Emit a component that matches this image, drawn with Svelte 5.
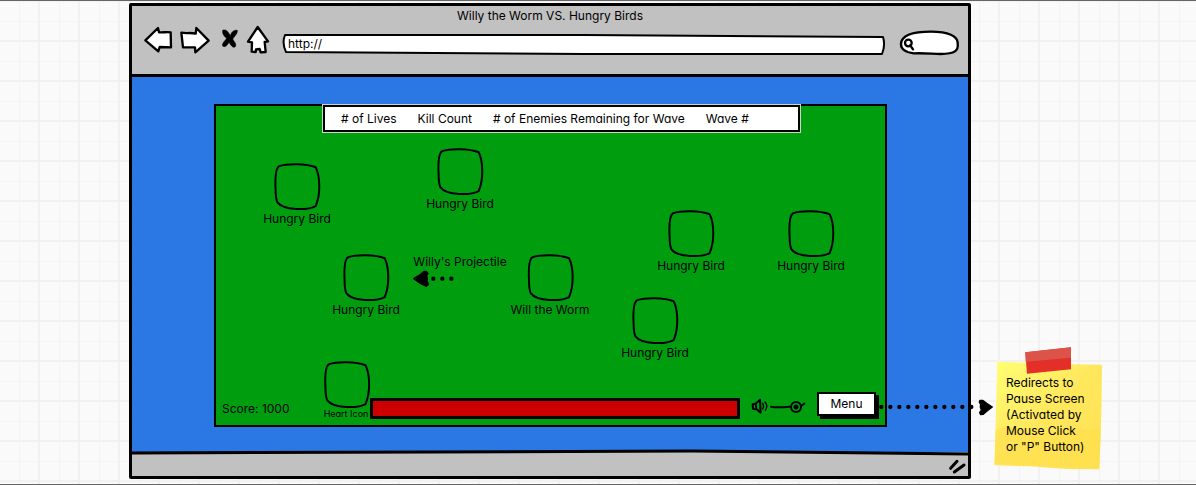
<script>
  const sprites = [
    { name: 'Hungry Bird', x: 81, y: 56 },
    { name: 'Hungry Bird', x: 244, y: 41 },
    { name: 'Hungry Bird', x: 150, y: 147 },
    { name: 'Will the Worm', x: 334, y: 147 },
    { name: 'Hungry Bird', x: 475, y: 103 },
    { name: 'Hungry Bird', x: 595, y: 103 },
    { name: 'Hungry Bird', x: 439, y: 190 }
  ];
  const fieldWidth = 669;
  const stats = ['# of Lives', 'Kill Count', '# of Enemies Remaining for Wave', 'Wave #'];
  const noteLines = ['Redirects to', 'Pause Screen', '(Activated by', 'Mouse Click', 'or "P" Button)'];
  let url = $state('http://');
  let query = $state('');
  let volume = $state(82);
</script>

{#snippet tile()}
  <svg class="tile" viewBox="191 67 141 148" aria-hidden="true">
    <path d="M198 150C196 112 199 86 208 80C235 71 290 72 319 83C333 112 334 165 319 200C296 213 222 214 203 188C198 176 198 165 198 150Z" />
  </svg>
{/snippet}

<div class="page">
  <section class="browser">
    <header>
      <h1>Willy the Worm VS. Hungry Birds</h1>
      <div class="toolbar">
        <button aria-label="Back">
          <svg width="30" height="30" viewBox="67 75 90 90"><path d="M74 121L112 84L115 97C128 98 139 95 150 97L151 142L117 141L113 154Z" /></svg>
        </button>
        <button aria-label="Forward">
          <svg width="30" height="30" viewBox="183 75 90 90"><path d="M184 98C199 101 212 97 227 101L229 84L266 122L226 157L225 142L189 142Z" /></svg>
        </button>
        <button aria-label="Stop">
          <svg width="20" height="30" viewBox="297 75 60 90"><path class="solid" d="M309 91C320 86 325 98 331 107C334 97 341 89 352 91C353 101 343 109 338 117C343 127 351 132 345 141C335 144 332 132 327 127C321 136 317 143 308 138C306 128 316 123 320 115C312 109 305 99 309 91Z" /></svg>
        </button>
        <button aria-label="Home">
          <svg width="24" height="30" viewBox="381 75 72 90"><path d="M413 81L444 124L434 126L437 156L422 157L419 147L408 148L407 156L395 155L396 127L384 125Z" /></svg>
        </button>
        <label class="address">
          <svg viewBox="0 0 600 21" preserveAspectRatio="none" aria-hidden="true"><path d="M2 1L300 1L598 3C600 9 599 15 597 20L300 20L3 18C0 12 0 6 2 1Z" /></svg>
          <input type="text" aria-label="Address" bind:value={url} />
        </label>
        <label class="search">
          <svg viewBox="597 93 183 75" aria-hidden="true">
            <path d="M603 134C605 108 640 98 693 98C745 98 773 111 773 132C776 156 765 164 722 165C690 164 675 162 641 163C615 160 602 151 603 134Z" />
            <circle cx="625" cy="132" r="10" /><path d="M631 139L639 151" />
          </svg>
          <input type="text" aria-label="Search" bind:value={query} />
        </label>
      </div>
    </header>

    <main>
      <div class="stage">
        <div class="stats">
          {#each stats as stat}<span>{stat}</span>{/each}
        </div>
        {#each sprites as s}
          <div class="sprite" style="left: {(s.x / fieldWidth) * 100}%; top: {s.y}px">
            {@render tile()}
            <span>{s.name}</span>
          </div>
        {/each}
        <div class="projectile">
          <span>Willy's Projectile</span>
          <svg width="42" height="18" viewBox="39 387 126 54" aria-hidden="true">
            <path class="head" d="M41 413L62 400L72 391L79 391L84 397L80 405L82 413L81 421L86 430L79 436L70 432L56 424Z" />
            <path class="dots" d="M100 413H160" />
          </svg>
        </div>
        <div class="controls">
          <span class="score">Score: 1000</span>
          <div class="heart">{@render tile()}<small>Heart Icon</small></div>
          <div class="health" role="img" aria-label="Health"></div>
          <label class="volume">
            <svg width="56" height="18" viewBox="155 144 168 54" aria-hidden="true">
              <path d="M160 163L169 161L182 149L184 188L172 178L161 177Z" /><path d="M169 161L171 177" />
              <path class="thin" d="M190 160Q195 169 190 177M197 156Q207 168 198 181" />
              <path d="M215 170Q235 174 270 170M305 168L315 161" />
            </svg>
            <input type="range" aria-label="Volume" bind:value={volume} />
          </label>
          <div class="menu">
            <button>Menu</button>
            <svg class="link" width="116" height="18" viewBox="537 144 348 54" aria-hidden="true">
              <path class="dots" d="M544 171H820" />
              <path class="head" d="M840 151L848 151L860 160L877 171L862 182L850 193L842 194L839 188L844 180L841 171L842 163L838 157Z" />
            </svg>
          </div>
        </div>
      </div>
    </main>

    <footer>
      <svg class="edge" viewBox="0 0 836 8" preserveAspectRatio="none" aria-hidden="true"><path class="fill" d="M0 3L300 2L560 1L836 4V8H0Z" /><path d="M0 3L300 2L560 1L836 4" /></svg>
      <svg class="grip" width="18" height="14" viewBox="748 331 54 42" aria-hidden="true"><path d="M753 356L772 335M764 367L793 346" /></svg>
    </footer>
  </section>

  <aside class="note">
    <svg viewBox="66 48 339 375" aria-hidden="true">
      <defs>
        <linearGradient id="paper" x1="0" y1="0" x2="1" y2="1">
          <stop offset="0" stop-color="#ffff73" /><stop offset="0.3" stop-color="#fff067" /><stop offset="0.5" stop-color="#ffe75c" /><stop offset="1" stop-color="#ffe152" />
        </linearGradient>
      </defs>
      <path fill="url(#paper)" d="M82 95L230 101L396 104L394 250L388 418L290 417L180 409L73 406L77 280Z" />
      <path fill="#ffe04f" d="M77 300L105 292L230 312L280 300L393 296L388 414L180 407L74 402Z" opacity=".7" />
      <path fill="#e32f27" d="M166 67L303 52V118L171 131Z" />
      <path fill="#dc534a" d="M166 67L303 52V83L167 95Z" />
    </svg>
    <p>{#each noteLines as line}<span>{line}</span>{/each}</p>
  </aside>
</div>

<style>
  :global(body) { margin: 0; }
  * { box-sizing: border-box; }
  .page {
    display: grid;
    grid-template-columns: minmax(0, 1fr) 225px;
    min-height: 100vh;
    padding: 2px 0 5px 129px;
    border: solid #666;
    border-width: 1px 0;
    background-color: #fafafa;
    background-image:
      linear-gradient(90deg, #f1f1f1 2px, transparent 2px),
      linear-gradient(#f1f1f1 2px, transparent 2px),
      linear-gradient(90deg, #f4f4f4 1px, transparent 1px),
      linear-gradient(#f4f4f4 1px, transparent 1px);
    background-size: 40px 40px;
    background-position: 38px 0, 0 39px, 19px 0, 0 20px;
    font: 12px/16px Inter, "Liberation Sans", sans-serif;
    font-feature-settings: "cv11";
    color: #000;
  }
  button, input { font: inherit; font-feature-settings: inherit; color: inherit; }
  svg { display: block; overflow: visible; }
  .browser {
    display: flex;
    flex-direction: column;
    border: 3px solid #000;
    border-radius: 2px;
    background: #c1c1c1;
  }
  header { padding-bottom: 19px; border-bottom: 3px solid #000; }
  h1 { margin: 0; font-size: 12px; font-weight: 400; line-height: 19px; text-align: center; }
  .toolbar { display: flex; align-items: flex-end; gap: 8px; padding: 0 8px 0 11px; }
  .toolbar button { padding: 0; border: 0; background: none; }
  .toolbar path, .search circle { fill: #fff; stroke: #000; stroke-width: 7; stroke-linejoin: round; stroke-linecap: round; }
  .toolbar .solid { fill: #000; stroke-width: 2; }
  .address { position: relative; flex: 1; height: 21px; margin: 0 6px 0 4px; }
  .address svg { position: absolute; inset: 0; width: 100%; height: 100%; }
  .toolbar .address path { stroke-width: 2; vector-effect: non-scaling-stroke; }
  .toolbar input { position: relative; display: block; width: 100%; height: 100%; padding: 0 5px 3px; border: 0; outline: 0; background: none; }
  .search { position: relative; width: 61px; height: 25px; }
  .search svg { position: absolute; inset: 0; }
  .toolbar .search input { padding-left: 18px; }

  main { flex: 1; display: flex; padding: 27px 81px 25px 82px; background: #2b78e4; }
  .stage {
    position: relative;
    flex: 1;
    display: flex;
    flex-direction: column;
    justify-content: space-between;
    min-height: 320px;
    border: 2px solid #000;
    background: #009e0f;
  }
  .stats {
    display: flex;
    gap: 21px;
    width: 477px;
    margin: -1px 0 0 107px;
    padding: 4px 16px 3px;
    border: 2px solid #000;
    outline: 1px solid #c8d8c8;
    background: #fff;
    white-space: nowrap;
  }
  .sprite { position: absolute; display: flex; flex-direction: column; align-items: center; transform: translateX(-50%); white-space: nowrap; }
  .tile { width: 47px; height: 49px; fill: none; stroke: #000; stroke-width: 6; }
  .projectile { position: absolute; left: 29.5%; top: 148px; white-space: nowrap; }
  .head { fill: #000; stroke: #000; stroke-width: 4; stroke-linejoin: round; }
  .dots { fill: none; stroke: #000; stroke-width: 13; stroke-linecap: round; stroke-dasharray: 0 27; }

  .controls { display: flex; align-items: flex-end; padding: 0 6px 6px; }
  .score { width: 100px; padding-bottom: 2px; }
  .heart { display: flex; flex-direction: column; align-items: center; width: 48px; white-space: nowrap; }
  .heart small { font-size: 9px; line-height: 10px; }
  .health { flex: 1; height: 21px; border: 3px solid #000; background: #c00; }
  .volume { position: relative; width: 56px; margin: 0 10px 3px 11px; }
  .volume svg { fill: none; stroke: #000; stroke-width: 6; stroke-linejoin: round; stroke-linecap: round; }
  .volume .thin { stroke-width: 4; }
  .volume input { position: absolute; left: 19px; top: 3px; width: 36px; height: 12px; margin: 0; appearance: none; background: none; }
  .volume input::-webkit-slider-thumb {
    appearance: none;
    width: 12px;
    height: 12px;
    border: 2px solid #000;
    border-radius: 50%;
    background: radial-gradient(circle, #000 2px, transparent 3px);
  }
  .menu { position: relative; margin-bottom: 3px; }
  .menu button { display: block; width: 59px; height: 24px; margin-right: 3px; padding: 0; border: 2px solid #000; background: #fff; box-shadow: 3px 3px 0 #000; }
  .link { position: absolute; left: 100%; top: 6px; z-index: 1; }

  footer { position: relative; display: flex; justify-content: flex-end; padding: 8px 1px 2px; }
  .edge { position: absolute; left: 0; top: -2px; width: 100%; height: 8px; fill: none; stroke: #000; stroke-width: 3; }
  .edge .fill { fill: #c1c1c1; stroke: none; }
  .grip { stroke: #000; stroke-width: 9; stroke-linecap: round; }

  .note { position: relative; align-self: end; width: 113px; min-height: 125px; margin: 0 0 8px 21px; padding: 29px 0 0 14px; }
  .note svg { position: absolute; inset: 0; width: 100%; height: 100%; }
  .note p { position: relative; margin: 0; white-space: nowrap; }
  .note span { display: block; }
</style>
